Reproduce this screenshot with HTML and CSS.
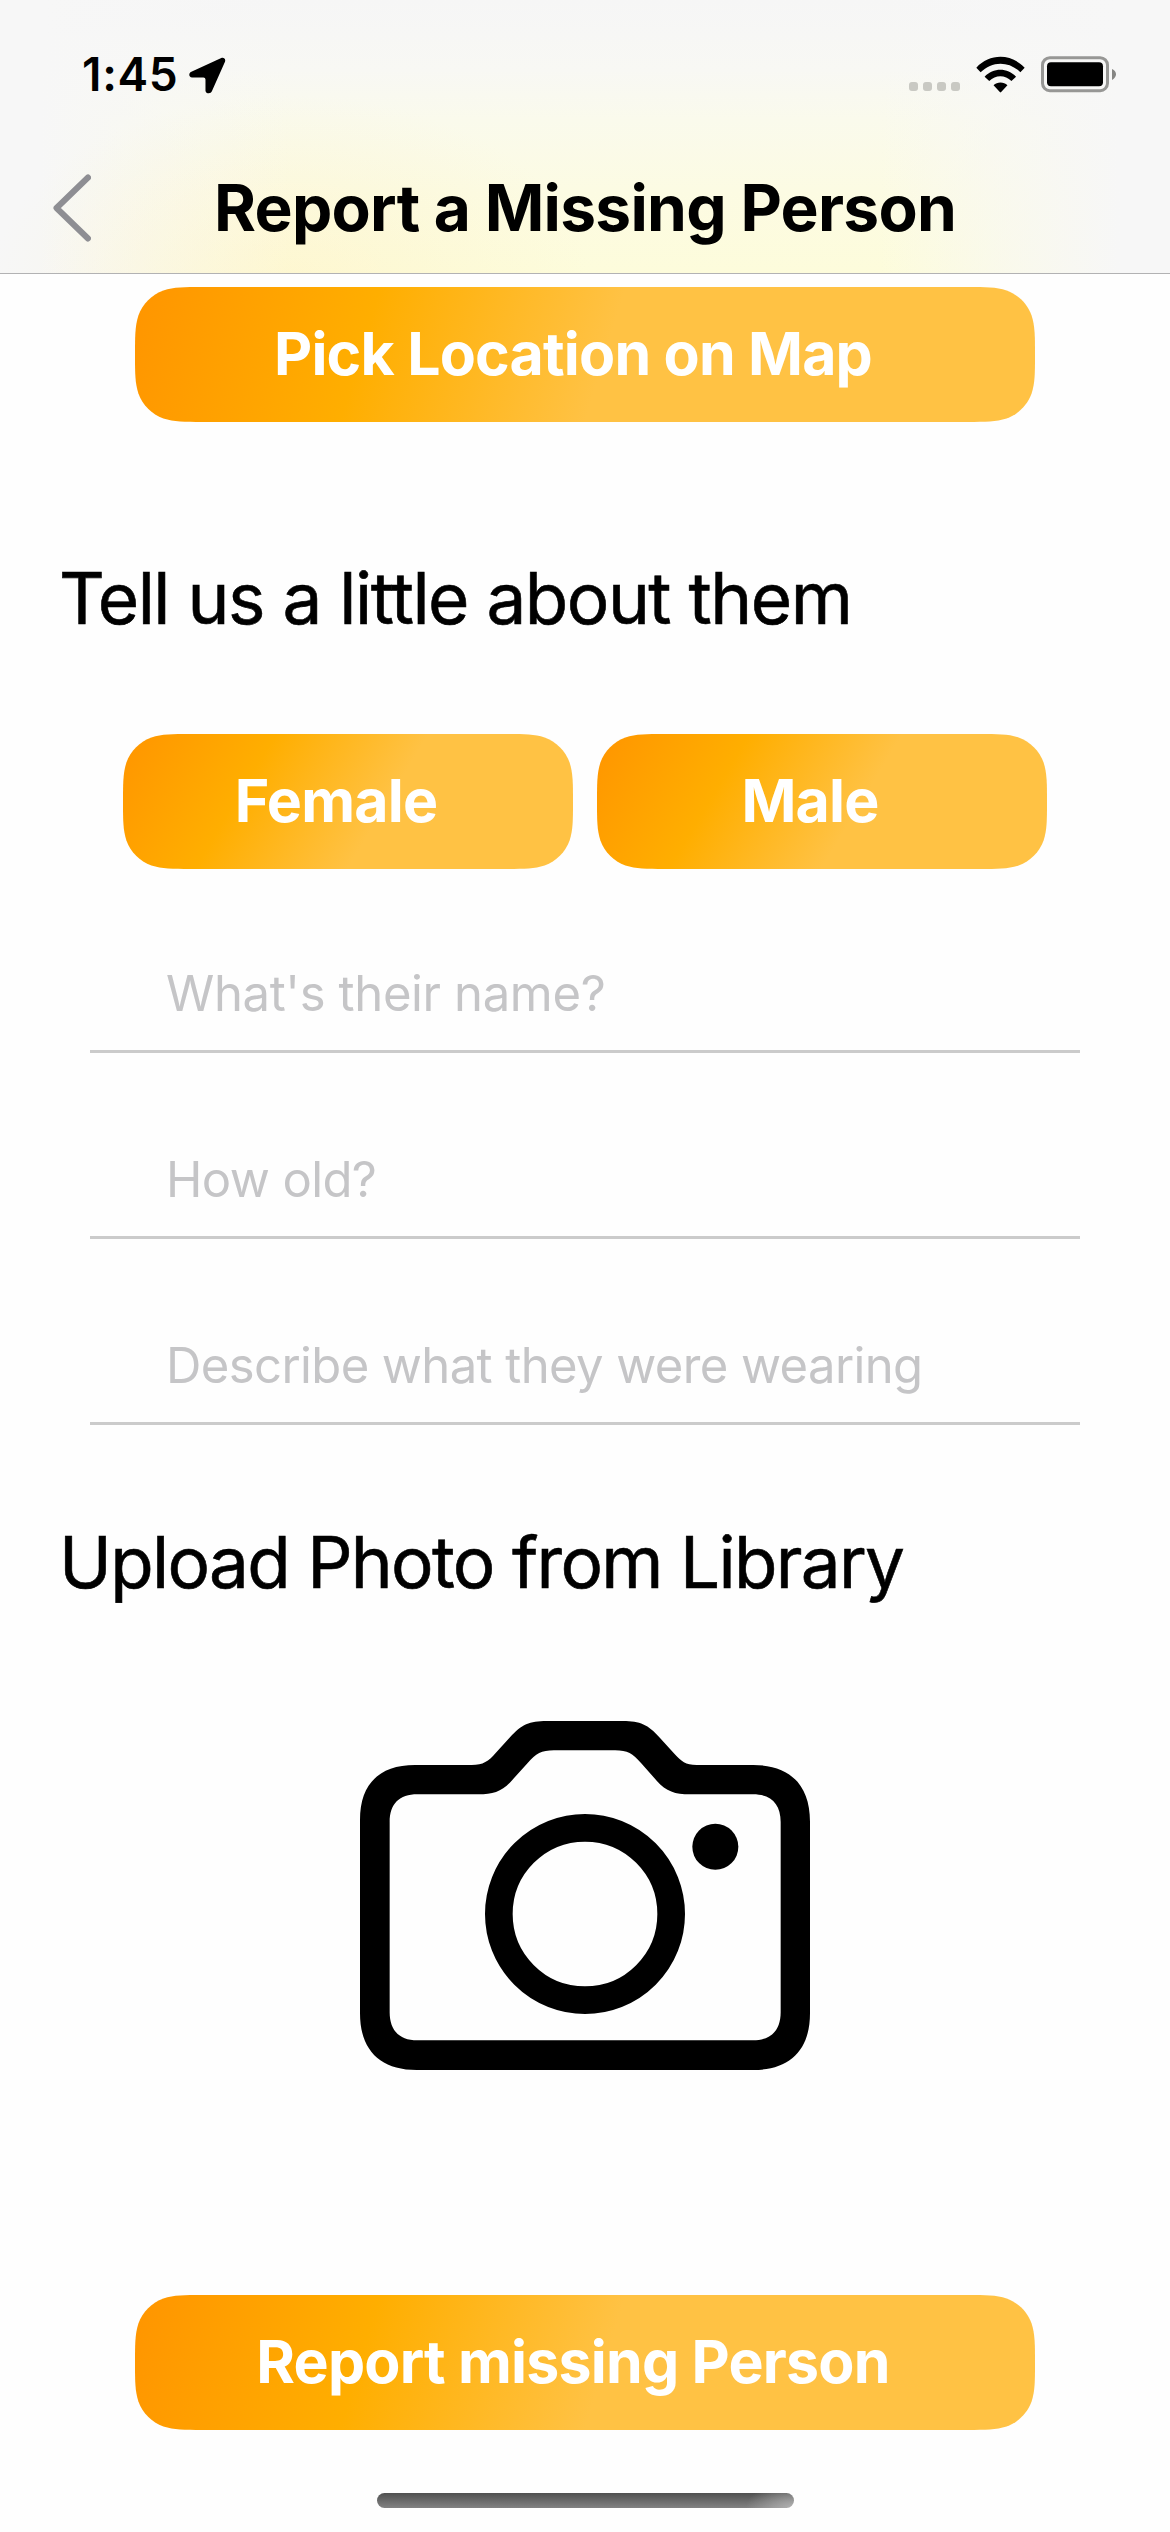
FILE: index.html
```
<!DOCTYPE html>
<html lang="en">
<head>
<meta charset="utf-8">
<title>Report a Missing Person</title>
<link rel="stylesheet" href="styles.css">
</head>
<body>
<div class="screen">
  <header class="header">
    <div class="status">
      <span class="time">1:45</span>
      <svg class="arrow" viewBox="56 35 110 110"><path d="M152 38C159 35 166 41 163 49L124 137C121 146 105 144 105 135V102Q105 96 99 96H65C55 96 54 83 63 79Z"/></svg>
      <div class="status-right">
        <div class="dots"><i></i><i></i><i></i><i></i></div>
        <svg class="wifi" viewBox="223 43 148 111">
          <path d="M224 78C264 34 329 34 370 78L357 92C324 57 270 57 237 92Z"/>
          <path d="M249 105C275 77 318 77 344 105L330 118C311 99 282 99 263 118Z"/>
          <path d="M276 131C287 120 307 120 318 131L299 151Q297 154 295 151Z"/>
        </svg>
        <svg class="battery" viewBox="420 47 228 111">
          <rect class="shell" x="424.500" y="52" width="195" height="99" rx="22"/>
          <rect x="438" y="66" width="168" height="72" rx="12"/>
          <path class="nub" d="M633 86C641 89 645 96 645 102S641 115 633 119Z"/>
        </svg>
      </div>
    </div>
    <div class="nav">
      <svg class="back" viewBox="0 0 38 68"><path d="M35 3.500L3.500 34L35 64.500"/></svg>
      <h1 class="title">Report a Missing Person</h1>
    </div>
  </header>

  <main class="form">
    <button class="btn btn-wide">Pick Location on Map</button>
    <h2 class="heading about">Tell us a little about them</h2>
    <div class="gender">
      <button class="btn btn-half">Female</button>
      <button class="btn btn-half">Male</button>
    </div>
    <div class="fields">
      <input class="field" type="text" placeholder="What's their name?">
      <input class="field" type="text" placeholder="How old?">
      <input class="field" type="text" placeholder="Describe what they were wearing">
    </div>
    <h2 class="heading upload">Upload Photo from Library</h2>
    <svg class="camera" viewBox="90 93 1350 1047">
      <path fill-rule="evenodd" d="M255 225H425C460 225 475 214 497 189L540 142C575 103 598 93 650 93H879C930 93 955 104 988 142L1031 189C1055 215 1066 225 1100 225H1270C1380 225 1440 285 1440 395V970C1440 1080 1380 1140 1270 1140H260C150 1140 90 1080 90 970V390C90 280 150 225 255 225ZM262 313C208 313 179 342 179 396V967C179 1021 208 1051 262 1051H1269C1323 1051 1352 1021 1352 967V396C1352 342 1323 313 1269 313H1080C1035 313 1009 304 980 272L933 219C908 191 893 181 855 181H672C634 181 618 191 593 219L545 272C516 304 490 313 445 313Z"/>
      <circle class="lens" cx="765" cy="672" r="258.500"/>
      <circle cx="1156" cy="470.500" r="69"/>
    </svg>
    <button class="btn btn-wide">Report missing Person</button>
  </main>
  <div class="home"></div>
</div>
</body>
</html>
```

FILE: styles.css
```
* { box-sizing: border-box; margin: 0; padding: 0; }

body {
  background: #fefefe;
  color: #000;
  font-family: Inter, "Liberation Sans", sans-serif;
}

svg { display: block; flex: none; }

.screen {
  width: 1170px;
  height: 2532px;
  display: flex;
  flex-direction: column;
  overflow: hidden;
}

.header {
  height: 274px;
  padding-bottom: 6px;
  border-bottom: 1px solid #b2b2b3;
  background:
    radial-gradient(ellipse 300px 190px at 290px 285px, rgba(255, 238, 190, .36), rgba(255, 238, 190, 0)),
    linear-gradient(90deg, #f7f7f7 40px, rgba(247, 247, 247, .55) 150px, rgba(247, 247, 247, 0) 290px, rgba(247, 247, 247, 0) 880px, rgba(247, 247, 247, .55) 1000px, #f7f7f7 1120px),
    linear-gradient(#f6f6f6, #f8f8f4 70px, #fafaec 120px, #fcfbe3 190px, #fdfcdb);
}

.status {
  height: 148px;
  display: flex;
  align-items: center;
  padding: 0 53px 0 82px;
}

.time {
  font-size: 46px;
  font-weight: 600;
  letter-spacing: .7px;
}

.arrow { width: 37px; height: 37px; margin: 2px 0 0 10px; }

.status-right {
  margin-left: auto;
  display: flex;
  align-items: center;
}

.dots {
  display: flex;
  gap: 5px;
  padding-top: 25px;
  margin-right: 16px;
}

.dots i {
  width: 9px;
  height: 9px;
  border-radius: 3px;
  background: #c9c9c3;
}

.wifi { width: 49px; height: 37px; margin-right: 16px; }
.battery { width: 76px; height: 37px; }
.shell { fill: none; stroke: #979795; stroke-width: 9; }
.nub { fill: #868684; }

.nav {
  height: 119px;
  display: flex;
  align-items: center;
  padding-left: 53px;
}

.back { width: 38px; height: 68px; }
.back path {
  fill: none;
  stroke: #8e8e93;
  stroke-width: 6;
  stroke-linecap: round;
  stroke-linejoin: round;
}

.title {
  margin-left: 123px;
  font-size: 64px;
  font-weight: 700;
  letter-spacing: -.72px;
  line-height: 80px;
  white-space: nowrap;
}

/* Form */
.form {
  display: flex;
  flex-direction: column;
  padding-top: 13px;
}

.btn {
  height: 135px;
  border: 0;
  padding: 0 24px 2px 0;
  color: #fff;
  font: 700 59px Inter, "Liberation Sans", sans-serif;
  letter-spacing: -.8px;
}

.btn-wide {
  width: 900px;
  align-self: center;
  background: linear-gradient(106.7deg, #ff9500 0, #ffae00 235px, #ffc244 470px);
  clip-path: path("M67.5 0H832.5C851 0 860.900 0 871.600 3.400C883.200 7.600 892.400 16.800 896.600 28.400C900 39.100 900 49 900 67.500C900 86 900 95.900 896.600 106.600C892.400 118.200 883.200 127.400 871.600 131.600C860.900 135 851 135 832.500 135H67.500C49 135 39.100 135 28.400 131.600C16.800 127.400 7.600 118.200 3.400 106.600C0 95.900 0 86 0 67.500C0 49 0 39.100 3.400 28.400C7.600 16.800 16.800 7.600 28.400 3.400C39.100 0 49 0 67.500 0Z");
}

.btn-half {
  width: 450px;
  background: linear-gradient(120.96deg, #ff9500 0, #ffae00 131px, #ffc244 262px);
  clip-path: path("M67.5 0H382.5C401 0 410.900 0 421.600 3.400C433.200 7.600 442.400 16.800 446.600 28.400C450 39.100 450 49 450 67.500C450 86 450 95.900 446.600 106.600C442.400 118.200 433.200 127.400 421.600 131.600C410.900 135 401 135 382.500 135H67.500C49 135 39.100 135 28.400 131.600C16.800 127.400 7.600 118.200 3.400 106.600C0 95.900 0 86 0 67.500C0 49 0 39.100 3.400 28.400C7.600 16.800 16.800 7.600 28.400 3.400C39.100 0 49 0 67.500 0Z");
}

.heading {
  font-size: 71px;
  font-weight: 400;
  line-height: 86px;
  white-space: nowrap;
  -webkit-text-stroke: .6px #000;
}

.about {
  margin: 133px 0 93px 59px;
  letter-spacing: -1.5px;
}

.gender {
  display: flex;
  justify-content: center;
  gap: 24px;
}

.fields {
  display: flex;
  flex-direction: column;
  gap: 66px;
  margin: 64px 90px 94px;
}

.field {
  height: 120px;
  padding: 3px 0 0 76px;
  border: 0;
  border-bottom: 3px solid #cbcbcb;
  background: none;
  font: 400 49px Inter, "Liberation Sans", sans-serif;
  letter-spacing: -.6px;
}

.field:first-child { letter-spacing: -.36px; }

.field::placeholder { color: #c5c5c7; opacity: 1; }

.upload {
  margin-left: 59px;
  letter-spacing: -1.7px;
}

.camera {
  width: 450px;
  height: 349px;
  align-self: center;
  margin: 116px 0 225px;
}

.lens { fill: none; stroke: #000; stroke-width: 83; }

.home {
  width: 417px;
  height: 15px;
  margin: 63px auto 0;
  border-radius: 8px;
  background:
    radial-gradient(ellipse 48px 26px at 100% 100%, rgba(190, 190, 190, .8), rgba(190, 190, 190, 0)),
    linear-gradient(#505050, #828282);
}
```
